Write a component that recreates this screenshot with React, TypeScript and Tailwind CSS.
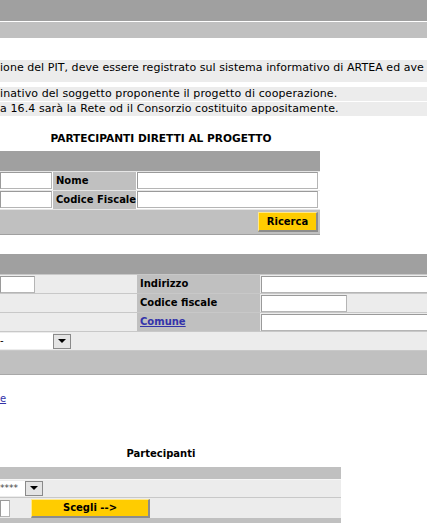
import React from "react";

const inputCls = "bg-white border border-[#b5b5b5] border-t-[#9a9a9a] border-l-[#9a9a9a] h-[17px] shrink-0";

function DropBtn() {
  return (
    <div className="w-[18px] h-[15px] shrink-0 bg-[#e4e4e4] border border-[#8a8a8a] flex items-center justify-center">
      <svg width="8" height="5" viewBox="0 0 8 5"><path d="M0 0 L8 0 L4 4 Z" fill="#000" /></svg>
    </div>
  );
}

function YellowBtn({ label, cls }: { label: string; cls: string }) {
  return (
    <div className={"bg-[#ffcc00] shrink-0 border border-t-[#ffe88a] border-l-[#ffe88a] border-b-[#8c8c8c] border-r-[#8c8c8c] border-b-2 border-r-2 flex items-center justify-center font-bold text-black " + cls}>
      {label}
    </div>
  );
}

export default function App() {
  return (
    <div className="w-[427px] h-[523px] overflow-hidden bg-white text-black text-[10px] font-['DejaVu_Sans',Verdana,sans-serif] whitespace-nowrap">
      <div className="h-[21px] bg-[#a0a0a0]" />
      <div className="h-px bg-white" />
      <div className="h-[16px] bg-[#c0c0c0]" />
      <div className="h-[22px]" />
      <div className="h-[22px] bg-[#ececec] leading-[13px] pt-px text-[11px] tracking-[0.05px]">ione del PIT, deve essere registrato sul sistema informativo di ARTEA ed ave</div>
      <div className="h-[5px]" />
      <div className="h-[14px] bg-[#ececec] leading-[14px] text-[11px] tracking-[0.1px]">inativo del soggetto proponente il progetto di cooperazione.</div>
      <div className="h-px bg-white" />
      <div className="h-[14px] bg-[#ececec] leading-[14px] text-[11px] tracking-[0.1px]">a 16.4 sarà la Rete od il Consorzio costituito appositamente.</div>
      <div className="h-[16px]" />
      <div className="w-[322px] text-center font-bold leading-[13px] h-[13px] text-[10.6px]">PARTECIPANTI DIRETTI AL PROGETTO</div>
      <div className="h-[6px]" />

      {/* Table 1 */}
      <div className="w-[320px]">
        <div className="h-[20px] bg-[#a0a0a0]" />
        <div className="flex h-[19px] border-t border-[#e6e6e6]">
          <div className="w-[53px] shrink-0 pr-px"><div className={inputCls + " w-full"} /></div>
          <div className="w-[83px] shrink-0 bg-[#c0c0c0] font-bold pl-[3px] leading-[18px]">Nome</div>
          <div className="flex-1 pl-px pr-[2px]"><div className={inputCls + " w-full"} /></div>
        </div>
        <div className="flex h-[19px] border-t border-[#e6e6e6]">
          <div className="w-[53px] shrink-0 pr-px"><div className={inputCls + " w-full"} /></div>
          <div className="w-[83px] shrink-0 bg-[#c0c0c0] font-bold pl-[3px] leading-[18px]">Codice Fiscale</div>
          <div className="flex-1 pl-px pr-[2px]"><div className={inputCls + " w-full"} /></div>
        </div>
        <div className="h-[26px] bg-[#c0c0c0] border-t border-[#e6e6e6] border-b border-b-[#a0a0a0] flex justify-end items-start pt-[2px] pr-[2px]">
          <YellowBtn label="Ricerca" cls="w-[60px] h-[20px]" />
        </div>
      </div>

      <div className="h-[19px]" />

      {/* Table 2 */}
      <div className="w-[427px]">
        <div className="h-[20px] bg-[#a0a0a0]" />
        <div className="flex h-[19px] border-t border-[#c8c8c8] bg-[#ececec]">
          <div className="w-[137px] shrink-0 pt-px"><div className={inputCls + " w-[35px]"} /></div>
          <div className="w-[123px] shrink-0 bg-[#c0c0c0] font-bold pl-[3px] leading-[18px]">Indirizzo</div>
          <div className="flex-1 pl-px pt-px"><div className={inputCls + " w-[200px]"} /></div>
        </div>
        <div className="flex h-[19px] border-t border-[#c8c8c8] bg-[#ececec]">
          <div className="w-[137px] shrink-0" />
          <div className="w-[123px] shrink-0 bg-[#c0c0c0] font-bold pl-[3px] leading-[18px]">Codice fiscale</div>
          <div className="flex-1 pl-px pt-px"><div className={inputCls + " w-[86px]"} /></div>
        </div>
        <div className="flex h-[19px] border-t border-[#c8c8c8] bg-[#ececec]">
          <div className="w-[137px] shrink-0" />
          <div className="w-[123px] shrink-0 bg-[#c0c0c0] font-bold pl-[3px] leading-[18px]"><span className="underline text-[#3333aa]">Comune</span></div>
          <div className="flex-1 pl-px pt-px"><div className={inputCls + " w-[200px]"} /></div>
        </div>
        <div className="flex h-[19px] border-t border-[#c8c8c8] bg-[#ececec] items-center">
          <div className="w-[53px] shrink-0 h-[16px] bg-white leading-[16px]">-</div>
          <DropBtn />
        </div>
        <div className="h-[25px] bg-[#c0c0c0] border-t border-[#c8c8c8] border-b border-b-[#a8a8a8]" />
      </div>

      <div className="h-[18px]" />
      <div className="h-[12px] leading-[12px]"><span className="underline text-[#3333aa]">e</span></div>
      <div className="h-[42px]" />
      <div className="w-[322px] text-center font-bold leading-[13px] h-[13px]">Partecipanti</div>
      <div className="h-[7px]" />

      {/* Table 3 */}
      <div className="w-[341px]">
        <div className="h-[12px] bg-[#c0c0c0]" />
        <div className="flex h-[18px] bg-[#ececec] border-t border-[#f6f6f6] items-center">
          <div className="w-[25px] shrink-0 h-[15px] bg-white leading-[15px] text-[#444] text-[9px]">****</div>
          <DropBtn />
        </div>
        <div className="flex h-[21px] bg-[#ececec] border-t border-[#c8c8c8] items-center">
          <div className={inputCls + " w-[10px]"} />
          <div className="w-[21px] shrink-0" />
          <YellowBtn label="Scegli -->" cls="w-[119px] h-[19px]" />
        </div>
        <div className="h-[6px] bg-[#c0c0c0]" />
      </div>
    </div>
  );
}
